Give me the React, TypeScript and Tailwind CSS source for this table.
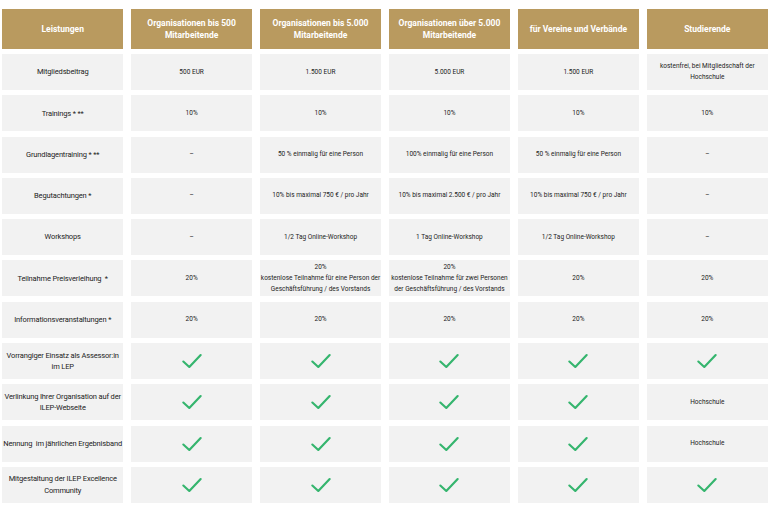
import React from 'react';

type Cell = string | string[] | true;

const headers: string[][] = [
  ['Leistungen'],
  ['Organisationen bis 500', 'Mitarbeitende'],
  ['Organisationen bis 5.000', 'Mitarbeitende'],
  ['Organisationen über 5.000', 'Mitarbeitende'],
  ['für Vereine und Verbände'],
  ['Studierende'],
];

const rows: { label: string[]; cells: Cell[] }[] = [
  { label: ['Mitgliedsbeitrag'], cells: ['500 EUR', '1.500 EUR', '5.000 EUR', '1.500 EUR', ['kostenfrei, bei Mitgliedschaft der', 'Hochschule']] },
  { label: ['Trainings * **'], cells: ['10%', '10%', '10%', '10%', '10%'] },
  { label: ['Grundlagentraining * **'], cells: ['–', '50 % einmalig für eine Person', '100% einmalig für eine Person', '50 % einmalig für eine Person', '–'] },
  { label: ['Begutachtungen *'], cells: ['–', '10% bis maximal 750 € / pro Jahr', '10% bis maximal 2.500 € / pro Jahr', '10% bis maximal 750 € / pro Jahr', '–'] },
  { label: ['Workshops'], cells: ['–', '1/2 Tag Online-Workshop', '1 Tag Online-Workshop', '1/2 Tag Online-Workshop', '–'] },
  {
    label: ['Teilnahme Preisverleihung  *'],
    cells: [
      '20%',
      ['20%', 'kostenlose Teilnahme für eine Person der', 'Geschäftsführung / des Vorstands'],
      ['20%', 'kostenlose Teilnahme für zwei Personen', 'der Geschäftsführung / des Vorstands'],
      '20%',
      '20%',
    ],
  },
  { label: ['Informationsveranstaltungen *'], cells: ['20%', '20%', '20%', '20%', '20%'] },
  { label: ['Vorrangiger Einsatz als Assessor:in', 'im LEP'], cells: [true, true, true, true, true] },
  { label: ['Verlinkung Ihrer Organisation auf der', 'ILEP-Webseite'], cells: [true, true, true, true, 'Hochschule'] },
  { label: ['Nennung  im jährlichen Ergebnisband'], cells: [true, true, true, true, 'Hochschule'] },
  { label: ['Mitgestaltung der ILEP Excellence', 'Community'], cells: [true, true, true, true, true] },
];

const Check = () => (
  <svg viewBox="0 0 24 24" className="w-[26px] h-[26px]" fill="none" stroke="#35b56e" strokeWidth="2" strokeLinecap="round" strokeLinejoin="round">
    <path d="M4 12.5l5.5 5L20 6.5" />
  </svg>
);

export default function App() {
  return (
    <div className="w-[768px] h-[512px] bg-white overflow-hidden pt-[9px] pl-[2px]" style={{ fontFamily: 'Roboto, "Noto Sans", sans-serif' }}>
      <div className="grid grid-cols-6 gap-x-[7.5px] gap-y-[5.3px]">
        {headers.map((h) => (
          <div key={h[0]} className="h-[40px] bg-[#b99a5f] text-white font-bold text-[8.5px] leading-[12px] flex flex-col items-center justify-center text-center mb-[-0.3px]">
            {h.map((l) => (
              <div key={l} className="whitespace-nowrap">{l}</div>
            ))}
          </div>
        ))}
        {rows.map((r) => (
          <React.Fragment key={r.label[0]}>
            <div className="h-[36px] bg-[#f2f2f2] text-[#222] text-[7.5px] leading-[11.5px] tracking-[-0.15px] flex flex-col items-center justify-center text-center">
              {r.label.map((l) => (
                <div key={l} className="whitespace-pre">{l}</div>
              ))}
            </div>
            {r.cells.map((c, i) => (
              <div key={i} className="h-[36px] bg-[#f2f2f2] text-[#222] text-[6.5px] leading-[11px] flex flex-col items-center justify-center text-center">
                {c === true ? <Check /> : Array.isArray(c) ? c.map((l) => <div key={l} className="whitespace-nowrap">{l}</div>) : c}
              </div>
            ))}
          </React.Fragment>
        ))}
      </div>
    </div>
  );
}
